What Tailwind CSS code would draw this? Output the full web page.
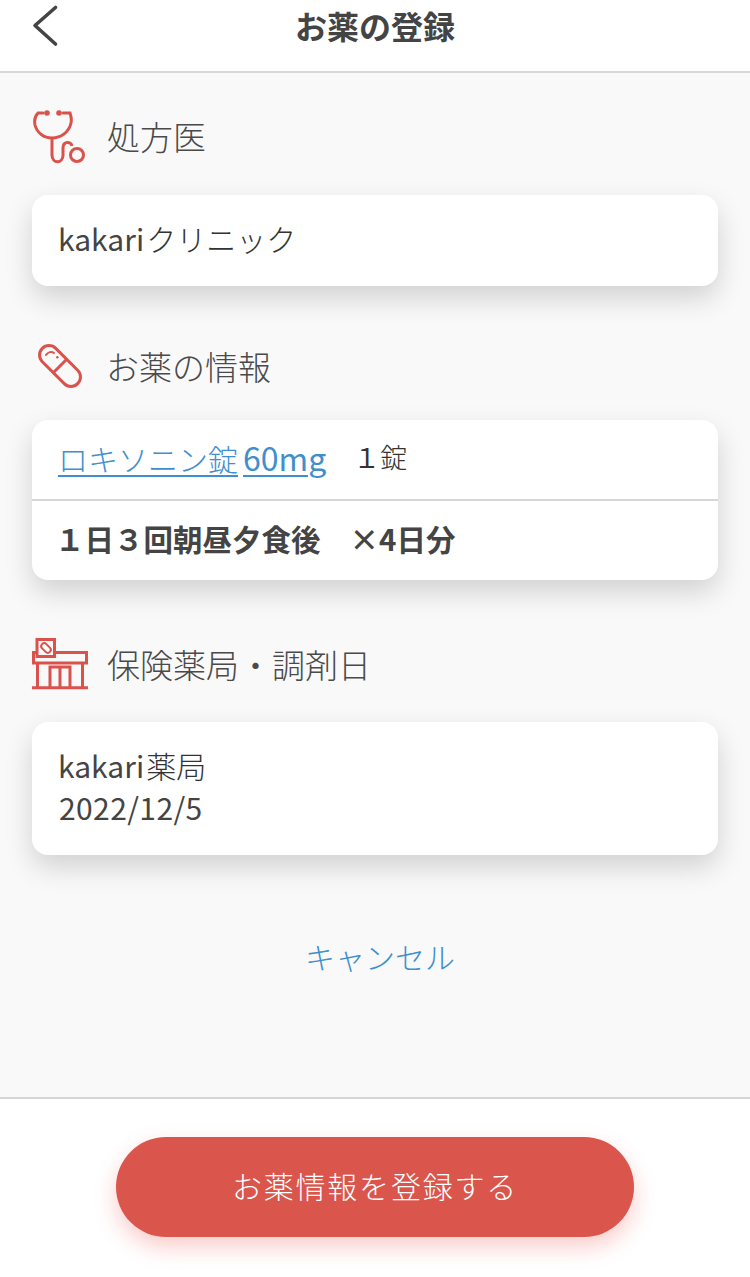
<!DOCTYPE html>
<html lang="ja">
<head>
<meta charset="utf-8">
<script src="https://cdn.jsdelivr.net/npm/@tailwindcss/browser@4"></script>
</head>
<body class="m-0 bg-white font-['Noto_Sans_CJK_JP',sans-serif] text-[#444444]">
<div class="flex h-[1277px] w-[750px] flex-col overflow-hidden">
  <header class="relative flex h-[73px] shrink-0 items-center justify-center border-b-2 border-[#d6d6d6] bg-white pb-[22px]">
    <svg class="absolute left-[32px] top-[4px]" width="28" height="44" viewBox="0 0 28 44" fill="none" stroke="#444444" stroke-width="3.6" stroke-linecap="round" stroke-linejoin="round"><path d="M23.500 3.500 L3 21.500 L23.500 40"/></svg>
    <h1 class="m-0 text-[32px] leading-none font-bold text-[#444444]">お薬の登録</h1>
  </header>
  <main class="flex min-h-0 flex-1 flex-col bg-[#f9f9f9] px-[32px]">
    <div class="flex h-[122px] shrink-0 items-center pt-[4px]">
      <div class="w-[75px] shrink-0">
        <svg class="block" width="54" height="58" viewBox="0 0 54 58" fill="none" stroke="#d9534c" stroke-width="3"><path d="M11 6 H6 C3 9 2 13 3 18 C5 26 12 31 20 31 C29 31 37 25 39 16 C40 12 39 9 38 6 H31" stroke-linecap="round"/><circle cx="15" cy="6" r="2.800" fill="#d9534c" stroke="none"/><circle cx="27" cy="6" r="2.800" fill="#d9534c" stroke="none"/><path d="M20 31 V48 C20 57 31 57 31 48 V41 C31 34 39 34 40 39"/><circle cx="45" cy="48" r="6.500"/></svg>
      </div>
      <h2 class="m-0 text-[33px] leading-none font-light text-[#4a4a4a]">処方医</h2>
    </div>
    <section class="flex h-[91px] shrink-0 items-center rounded-[16px] bg-white px-[27px] pb-[6px] text-[30px] leading-none font-light text-[#333333] shadow-[0_12px_28px_rgba(0,0,0,0.16)]"><span class="mr-[2px] -ml-[1px] font-normal text-[#444444]">kakari</span>クリニック</section>
    <div class="flex h-[134px] shrink-0 items-center pt-[26px]">
      <div class="w-[74px] shrink-0">
        <svg class="ml-[6px] block" width="44" height="44" viewBox="0 0 44 44" fill="none" stroke="#d9534c" stroke-width="3"><rect x="-3" y="12.500" width="50" height="19" rx="9.500" transform="rotate(45 22 22)"/><path d="M15.500 28.500 L28.500 15.500"/><path d="M8 11 C10 8 13.500 7 16 9" stroke-width="2" stroke-linecap="round"/><circle cx="19.300" cy="13.300" r="1.200" fill="#d9534c" stroke="none"/></svg>
      </div>
      <h2 class="m-0 text-[33px] leading-none font-light text-[#4a4a4a]">お薬の情報</h2>
    </div>
    <section class="flex h-[160px] shrink-0 flex-col rounded-[16px] bg-white shadow-[0_12px_28px_rgba(0,0,0,0.16)]">
      <div class="flex h-[81px] items-center gap-[27px] border-b-2 border-[#d6d6d6] pb-[6px] pl-[26px]">
        <a class="text-[30px] leading-none font-light text-[#3f8fce] underline decoration-2 underline-offset-[4px]">ロキソニン錠<span class="ml-[5px] text-[32px] font-normal">60mg</span></a>
        <span class="text-[27px] leading-none font-light text-[#333333]"><span class="font-normal">１</span>錠</span>
      </div>
      <div class="flex flex-1 items-center gap-[29px] pb-[4px] pl-[23px] text-[29.5px] leading-none font-bold">
        <span>１日３回朝昼夕食後</span><span>×4日分</span>
      </div>
    </section>
    <div class="flex h-[142px] shrink-0 items-center pt-[26px]">
      <div class="w-[75px] shrink-0">
        <svg class="block" width="56" height="52" viewBox="0 0 56 52" fill="none" stroke="#d9534c" stroke-width="3"><path d="M1.500 14.500 H54.500 V25 H1.500 Z"/><path d="M5.500 25 V50 M50.500 25 V50 M0 49.800 H56"/><path d="M18 49.800 V29 H38 V49.800 M28 29 V49.800"/><rect x="5" y="1.500" width="17.500" height="17" fill="#f9f9f9"/><rect x="8.500" y="7" width="11" height="6" rx="3" transform="rotate(45 14 10)" stroke-width="2"/></svg>
      </div>
      <h2 class="m-0 text-[33px] leading-none font-light text-[#4a4a4a]">保険薬局・調剤日</h2>
    </div>
    <section class="flex h-[133px] shrink-0 flex-col justify-center rounded-[16px] bg-white pb-[5px] pl-[27px] text-[30px] leading-[42px] font-light text-[#333333] shadow-[0_12px_28px_rgba(0,0,0,0.16)]">
      <div><span class="mr-[2px] -ml-[1px] font-normal text-[#444444]">kakari</span>薬局</div>
      <div class="tracking-[0.4px] font-normal text-[#444444]">2022/12/5</div>
    </section>
    <div class="mt-[86px] ml-[10px] text-center text-[30px] leading-none font-light text-[#3f8fce]">キャンセル</div>
  </main>
  <footer class="flex h-[180px] shrink-0 justify-center border-t-2 border-[#d6d6d6] bg-white pt-[38px]">
    <button class="flex h-[100px] w-[518px] items-center justify-center rounded-full border-0 bg-[#da554c] pb-[4px] text-[30px] leading-none font-light tracking-[1.8px] text-white shadow-[0_10px_22px_rgba(235,90,80,0.3)]">お薬情報を登録する</button>
  </footer>
</div>
</body>
</html>
